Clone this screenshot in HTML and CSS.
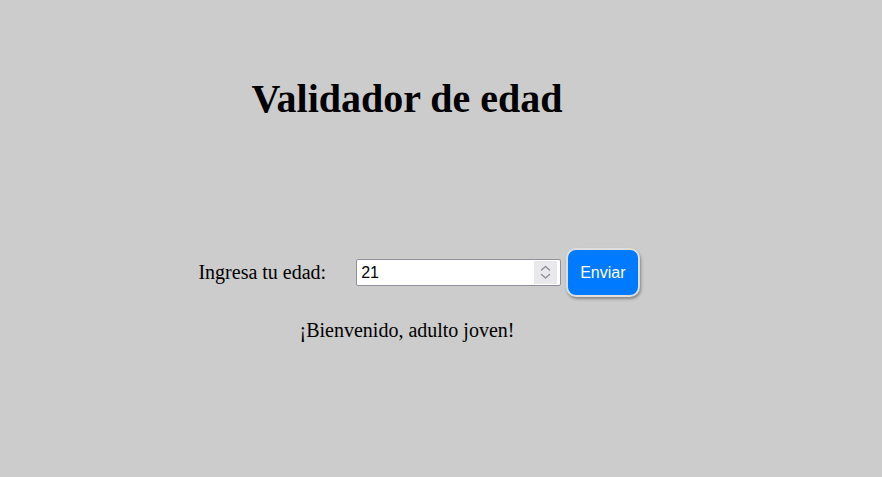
FILE: index.html
```html
<!DOCTYPE html>
<html lang="es">
<head>
<meta charset="utf-8">
<title>Validador de edad</title>
<link rel="stylesheet" href="styles.css">
</head>
<body>
<main class="app">
  <h1 class="title">Validador de edad</h1>
  <form class="row" onsubmit="return false;">
    <label class="label" for="edad">Ingresa tu edad:</label>
    <span class="field">
      <input class="age" id="edad" type="number" value="21">
      <svg class="spin" width="23" height="23" viewBox="0 0 23 23" aria-hidden="true">
        <rect x="0" y="0" width="23" height="23" fill="#e9e9ed"/>
        <path d="M7.5 9 L11.5 5.5 L15.5 9" fill="none" stroke="#8f8f96" stroke-width="1.4" stroke-linecap="round" stroke-linejoin="round"/>
        <path d="M7.5 13.5 L11.5 17 L15.5 13.5" fill="none" stroke="#8f8f96" stroke-width="1.4" stroke-linecap="round" stroke-linejoin="round"/>
      </svg>
    </span>
    <button class="btn" type="submit">Enviar</button>
  </form>
  <p class="msg">¡Bienvenido, adulto joven!</p>
</main>
</body>
</html>
```
FILE: styles.css
```css
html, body {
  margin: 0;
  padding: 0;
  background: #cccccc;
}
body {
  font-family: "Liberation Serif", "Times New Roman", serif;
  color: #000;
  height: 477px;
  overflow: hidden;
}
.app {
  width: 814px;
  padding-top: 76px;
  text-align: center;
}
.title {
  margin: 0;
  font-size: 40px;
  line-height: 46px;
  font-weight: bold;
}
.row {
  margin: 126px 0 0 0;
  padding-left: 24px;
  display: flex;
  justify-content: center;
  align-items: center;
}
.label {
  font-size: 20px;
  line-height: 23px;
  margin-right: 30px;
}
.field {
  position: relative;
  display: block;
  margin-right: 5px;
}
.age {
  display: block;
  box-sizing: border-box;
  width: 205px;
  height: 27px;
  margin: 0;
  padding: 1px 4px;
  font-family: "Liberation Sans", Arial, sans-serif;
  font-size: 16px;
  color: #000;
  background: #fff;
  border: 1px solid #8f8f9d;
  border-radius: 2px;
  -moz-appearance: textfield;
}
.age::-webkit-inner-spin-button,
.age::-webkit-outer-spin-button {
  -webkit-appearance: none;
  margin: 0;
}
.spin {
  position: absolute;
  right: 4px;
  top: 2px;
  display: block;
}
.btn {
  box-sizing: border-box;
  height: 49px;
  padding: 0 12px;
  font-family: "Liberation Sans", Arial, sans-serif;
  font-size: 16px;
  color: #fff;
  background: #007bff;
  border: 2px solid #dedede;
  border-radius: 10px;
  box-shadow: 1px 2px 3px rgba(0, 0, 0, 0.35);
}
.msg {
  margin: 22px 0 0 0;
  font-size: 20px;
  line-height: 23px;
}
```
